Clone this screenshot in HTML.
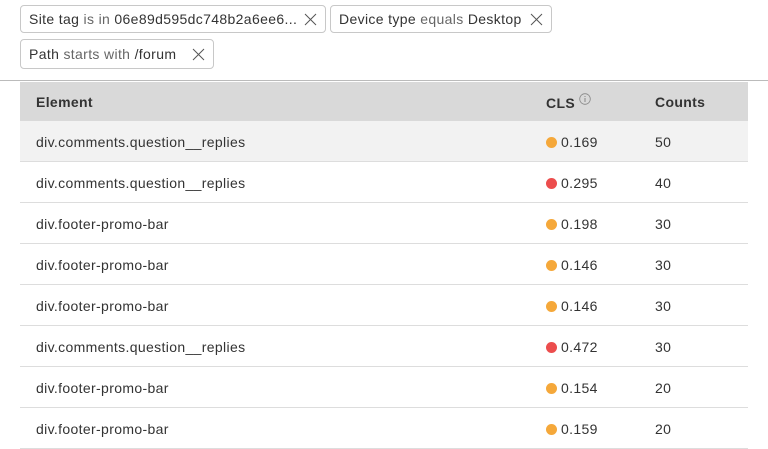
<!DOCTYPE html>
<html><head><style>
body{margin:0;width:768px;height:448px;overflow:hidden;background:#fff;font-family:"Liberation Sans",sans-serif;color:#333;font-size:14px;letter-spacing:0.35px}
.chip{position:absolute;height:28px;border:1px solid #c8c8c8;border-radius:4px;box-sizing:border-box;line-height:26px;padding-left:8px;font-size:14px;color:#333;white-space:nowrap}
.chip .g{color:#666}
.chip svg{position:absolute;right:8px;top:7px}
.hr{position:absolute;left:0;top:80px;width:768px;height:1px;background:#bbb}
table{position:absolute;left:20px;top:82px;width:728px;border-collapse:collapse}
th{background:#d9d9d9;height:39px;text-align:left;font-weight:bold;font-size:14px;padding:0}
td{height:39px;border-bottom:1px solid #ddd;padding:0;padding-top:1px}
td:first-child,th:first-child{padding-left:16px}
.dot{display:inline-block;width:11px;height:11px;border-radius:50%;margin-right:4px;vertical-align:-1px}
.o{background:#f5a83a}.r{background:#ec4d4d}
</style></head><body>
<div class="chip" style="left:20px;top:5px;width:306px">Site tag <span class="g">is in</span> 06e89d595dc748b2a6ee6...<svg width="13" height="13"><path d="M1 1L12 12M12 1L1 12" stroke="#555" stroke-width="1"/></svg></div>
<div class="chip" style="left:330px;top:5px;width:222px">Device type <span class="g">equals</span> Desktop<svg width="13" height="13"><path d="M1 1L12 12M12 1L1 12" stroke="#555" stroke-width="1"/></svg></div>
<div class="chip" style="left:20px;top:39px;width:194px;height:30px;line-height:28px">Path <span class="g">starts with</span> /forum<svg width="13" height="13" style="top:8px"><path d="M1 1L12 12M12 1L1 12" stroke="#555" stroke-width="1"/></svg></div>
<div class="hr"></div>
<table>
<tr><th style="width:510px">Element</th><th style="width:109px">CLS <svg width="12" height="12" style="vertical-align:3px"><circle cx="6" cy="6" r="5.3" fill="none" stroke="#888" stroke-width=".8"/><path d="M6 5v4M6 3v1" stroke="#888" stroke-width="1"/></svg></th><th>Counts</th></tr>
<tr style="background:#f2f2f2"><td>div.comments.question__replies</td><td><span class="dot o"></span>0.169</td><td>50</td></tr>
<tr><td>div.comments.question__replies</td><td><span class="dot r"></span>0.295</td><td>40</td></tr>
<tr><td>div.footer-promo-bar</td><td><span class="dot o"></span>0.198</td><td>30</td></tr>
<tr><td>div.footer-promo-bar</td><td><span class="dot o"></span>0.146</td><td>30</td></tr>
<tr><td>div.footer-promo-bar</td><td><span class="dot o"></span>0.146</td><td>30</td></tr>
<tr><td>div.comments.question__replies</td><td><span class="dot r"></span>0.472</td><td>30</td></tr>
<tr><td>div.footer-promo-bar</td><td><span class="dot o"></span>0.154</td><td>20</td></tr>
<tr><td>div.footer-promo-bar</td><td><span class="dot o"></span>0.159</td><td>20</td></tr>
</table>
</body></html>
